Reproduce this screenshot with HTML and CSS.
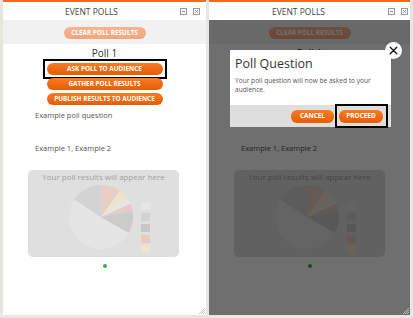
FILE: index.html
```html
<!DOCTYPE html>
<html lang="en">
<head>
<meta charset="utf-8">
<title>Event Polls</title>
<link rel="stylesheet" href="styles.css">
</head>
<body>
<div class="stage">
  <section class="panel panel--left">
    <header class="panel-head">
      <span class="panel-title">EVENT POLLS</span>
      <div class="win-icons">
        <svg class="win-icon" viewBox="0 0 7 7" width="7" height="7"><rect x="0.5" y="0.5" width="6" height="6" fill="none" stroke="#9a9a9a"/><line x1="2" y1="3.5" x2="5" y2="3.5" stroke="#8a8a8a"/></svg>
        <svg class="win-icon" viewBox="0 0 7 7" width="7" height="7"><rect x="0.5" y="0.5" width="6" height="6" fill="none" stroke="#9a9a9a"/><path d="M2 2L5 5M5 2L2 5" stroke="#8a8a8a" stroke-width="0.9"/></svg>
      </div>
    </header>
    <div class="toolbar"><button class="btn btn--faded">CLEAR POLL RESULTS</button></div>
    <div class="poll">
      <h2 class="poll-title">Poll 1</h2>
      <div class="actions">
        <button class="btn btn--wide is-highlight">ASK POLL TO AUDIENCE</button>
        <button class="btn btn--wide">GATHER POLL RESULTS</button>
        <button class="btn btn--wide">PUBLISH RESULTS TO AUDIENCE</button>
      </div>
      <p class="question">Example poll question</p>
      <p class="answers">Example 1, Example 2</p>
      <div class="results">
        <p class="results-note">Your poll results will appear here</p>
        <svg class="chart" viewBox="0 0 151 73" width="151" height="73">
          <path d="M73 33L100.71 49A32 32 0 1 1 46.16 15.57Z" fill="#e5e5e5"/>
          <path d="M73 33L46.16 15.57A32 32 0 0 1 73 1Z" fill="#d3d3d3"/>
          <path d="M73 33L73 1A32 32 0 0 1 91.81 7.11Z" fill="#e8cfc5"/>
          <path d="M73 33L91.81 7.11A32 32 0 0 1 99.53 15.11Z" fill="#eee4cc"/>
          <path d="M73 33L99.53 15.11A32 32 0 0 1 102.23 19.98Z" fill="#e6e6e6"/>
          <path d="M73 33L102.23 19.98A32 32 0 0 1 104.41 26.89Z" fill="#e4cbc3"/>
          <path d="M73 33L104.41 26.89A32 32 0 0 1 100.71 49Z" fill="#cbcbcb"/>
          <rect x="113" y="18" width="9" height="8" fill="#e6e6e6"/>
          <rect x="113" y="29" width="9" height="8" fill="#d2d2d2"/>
          <rect x="113" y="40" width="9" height="8" fill="#c7c7c7"/>
          <rect x="113" y="51" width="9" height="8" fill="#e7cbc1"/>
          <rect x="113" y="61" width="9" height="8" fill="#eee3cc"/>
        </svg>
      </div>
      <div class="dot"></div>
    </div>
    <svg class="grip" viewBox="0 0 6 6" width="6" height="6"><path d="M6 0L0 6M6 2L2 6M6 4L4 6" stroke="#bdbdbd" stroke-width="0.8"/></svg>
  </section>

  <section class="panel panel--right">
    <header class="panel-head">
      <span class="panel-title">EVENT POLLS</span>
      <div class="win-icons">
        <svg class="win-icon" viewBox="0 0 7 7" width="7" height="7"><rect x="0.5" y="0.5" width="6" height="6" fill="none" stroke="#9a9a9a"/><line x1="2" y1="3.5" x2="5" y2="3.5" stroke="#8a8a8a"/></svg>
        <svg class="win-icon" viewBox="0 0 7 7" width="7" height="7"><rect x="0.5" y="0.5" width="6" height="6" fill="none" stroke="#9a9a9a"/><path d="M2 2L5 5M5 2L2 5" stroke="#8a8a8a" stroke-width="0.9"/></svg>
      </div>
    </header>
    <div class="toolbar"><button class="btn btn--faded">CLEAR POLL RESULTS</button></div>
    <div class="poll">
      <h2 class="poll-title">Poll 1</h2>
      <div class="actions">
        <button class="btn btn--wide">ASK POLL TO AUDIENCE</button>
        <button class="btn btn--wide">GATHER POLL RESULTS</button>
        <button class="btn btn--wide">PUBLISH RESULTS TO AUDIENCE</button>
      </div>
      <p class="question">Example poll question</p>
      <p class="answers">Example 1, Example 2</p>
      <div class="results">
        <p class="results-note">Your poll results will appear here</p>
        <svg class="chart" viewBox="0 0 151 73" width="151" height="73">
          <path d="M73 33L100.71 49A32 32 0 1 1 46.16 15.57Z" fill="#e5e5e5"/>
          <path d="M73 33L46.16 15.57A32 32 0 0 1 73 1Z" fill="#d3d3d3"/>
          <path d="M73 33L73 1A32 32 0 0 1 91.81 7.11Z" fill="#e8cfc5"/>
          <path d="M73 33L91.81 7.11A32 32 0 0 1 99.53 15.11Z" fill="#eee4cc"/>
          <path d="M73 33L99.53 15.11A32 32 0 0 1 102.23 19.98Z" fill="#e6e6e6"/>
          <path d="M73 33L102.23 19.98A32 32 0 0 1 104.41 26.89Z" fill="#e4cbc3"/>
          <path d="M73 33L104.41 26.89A32 32 0 0 1 100.71 49Z" fill="#cbcbcb"/>
          <rect x="113" y="18" width="9" height="8" fill="#e6e6e6"/>
          <rect x="113" y="29" width="9" height="8" fill="#d2d2d2"/>
          <rect x="113" y="40" width="9" height="8" fill="#c7c7c7"/>
          <rect x="113" y="51" width="9" height="8" fill="#e7cbc1"/>
          <rect x="113" y="61" width="9" height="8" fill="#eee3cc"/>
        </svg>
      </div>
      <div class="dot"></div>
    </div>
    <div class="overlay"></div>
    <div class="modal">
      <div class="modal-body">
        <h3 class="modal-title">Poll Question</h3>
        <p class="modal-text">Your poll question will now be asked to your audience.</p>
      </div>
      <div class="modal-foot">
        <button class="btn btn--cancel">CANCEL</button>
        <button class="btn btn--proceed is-highlight">PROCEED</button>
      </div>
      <button class="modal-close" aria-label="Close"><svg viewBox="0 0 9 9" width="9" height="9"><path d="M1.2 1.2L7.8 7.8M7.8 1.2L1.2 7.8" stroke="#111" stroke-width="1.3" stroke-linecap="round"/></svg></button>
    </div>
    <svg class="grip" viewBox="0 0 6 6" width="6" height="6"><path d="M6 0L0 6M6 2L2 6M6 4L4 6" stroke="#c8c8c8" stroke-width="0.8"/></svg>
  </section>
</div>
</body>
</html>
```

FILE: styles.css
```css
html, body {
  margin: 0;
  padding: 0;
}

body {
  width: 413px;
  height: 318px;
  overflow: hidden;
  background: #e8e6e3;
  font-family: "Open Sans", "DejaVu Sans", sans-serif;
}

.stage {
  display: flex;
  gap: 3px;
  padding: 0 3px;
  height: 315px;
}

.panel {
  position: relative;
  display: flex;
  flex-direction: column;
  background: #fff;
  border-top: 2px solid #f26a1b;
  overflow: hidden;
}

.panel--left { width: 203px; }
.panel--right { width: 201px; }

.panel-head {
  height: 18px;
  display: flex;
  align-items: center;
  flex: none;
}

.panel-title {
  flex: 1;
  text-align: center;
  font-size: 8.5px;
  color: #444;
}

.win-icons {
  display: flex;
  gap: 6px;
  padding-right: 6px;
  padding-top: 1px;
}

.panel--right .win-icons { padding-right: 2px; }

.win-icon { display: block; }

.toolbar {
  height: 24px;
  box-sizing: border-box;
  padding-top: 7px;
  background: #f1f1f1;
  display: flex;
  justify-content: center;
  flex: none;
}

.btn {
  position: relative;
  border: 0;
  margin: 0;
  padding: 0;
  height: 12px;
  border-radius: 6px;
  color: #fff;
  font-family: "Open Sans", "DejaVu Sans", sans-serif;
  font-weight: 700;
  font-size: 6.4px;
  line-height: 12px;
  background: linear-gradient(#f77d24, #e65c03);
  display: flex;
  align-items: center;
  justify-content: center;
}

.btn--faded {
  width: 82px;
  background: linear-gradient(#f6b592, #f2a67c);
}

.poll {
  display: flex;
  flex-direction: column;
}

.poll-title {
  margin: 3px 0 0;
  font-size: 10px;
  line-height: 12px;
  font-weight: 400;
  color: #333;
  text-align: center;
}

.actions {
  margin-top: 4px;
  display: flex;
  flex-direction: column;
  align-items: center;
  gap: 3px;
}

.btn--wide { width: 116px; }

.is-highlight::after {
  content: "";
  position: absolute;
  top: -4px;
  bottom: -4px;
  left: -4px;
  right: -4px;
  border: 2px solid #000;
}

.btn--proceed.is-highlight::after {
  top: -6px;
  bottom: -5px;
  left: -4px;
  right: -5px;
}

.question,
.answers {
  margin: 0;
  padding-left: 32px;
  font-size: 7.5px;
  line-height: 10px;
  color: #555;
}

.question { margin-top: 5px; }
.answers { margin-top: 23px; }

.results {
  margin: 17px 0 0 25px;
  width: 151px;
  height: 87px;
  background: #dfdfdf;
  border-radius: 5px;
}

.results-note {
  margin: 0;
  height: 14px;
  font-size: 8px;
  line-height: 14px;
  color: #a2a2a2;
  text-align: center;
}

.chart { display: block; }

.dot {
  margin: 7px auto 0;
  width: 4px;
  height: 4px;
  border-radius: 50%;
  background: #38ad45;
}

.grip {
  position: absolute;
  right: 1px;
  bottom: 1px;
}

.overlay {
  position: absolute;
  top: 18px;
  left: 0;
  right: 0;
  bottom: 0;
  background: rgba(0, 0, 0, 0.565);
}

.modal {
  position: absolute;
  top: 48px;
  left: 21px;
  width: 161px;
  height: 77px;
  background: #fff;
  display: flex;
  flex-direction: column;
}

.modal-body {
  padding: 6px 5px 0;
}

.modal-title {
  margin: 0;
  font-size: 12.5px;
  line-height: 15px;
  font-weight: 400;
  color: #333;
}

.modal-text {
  margin: 6px 0 0;
  font-size: 6.6px;
  line-height: 8.5px;
  color: #555;
}

.modal-foot {
  margin-top: auto;
  height: 22px;
  background: #dedede;
  display: flex;
  justify-content: flex-end;
  align-items: center;
  gap: 5px;
  padding-right: 8px;
}

.btn--cancel { width: 43px; height: 13px; }
.btn--proceed { width: 44px; height: 13px; }

.modal-close {
  position: absolute;
  top: -8px;
  right: -11px;
  width: 17px;
  height: 17px;
  padding: 0;
  border: 0;
  border-radius: 50%;
  background: #fff;
  display: flex;
  align-items: center;
  justify-content: center;
}
```
